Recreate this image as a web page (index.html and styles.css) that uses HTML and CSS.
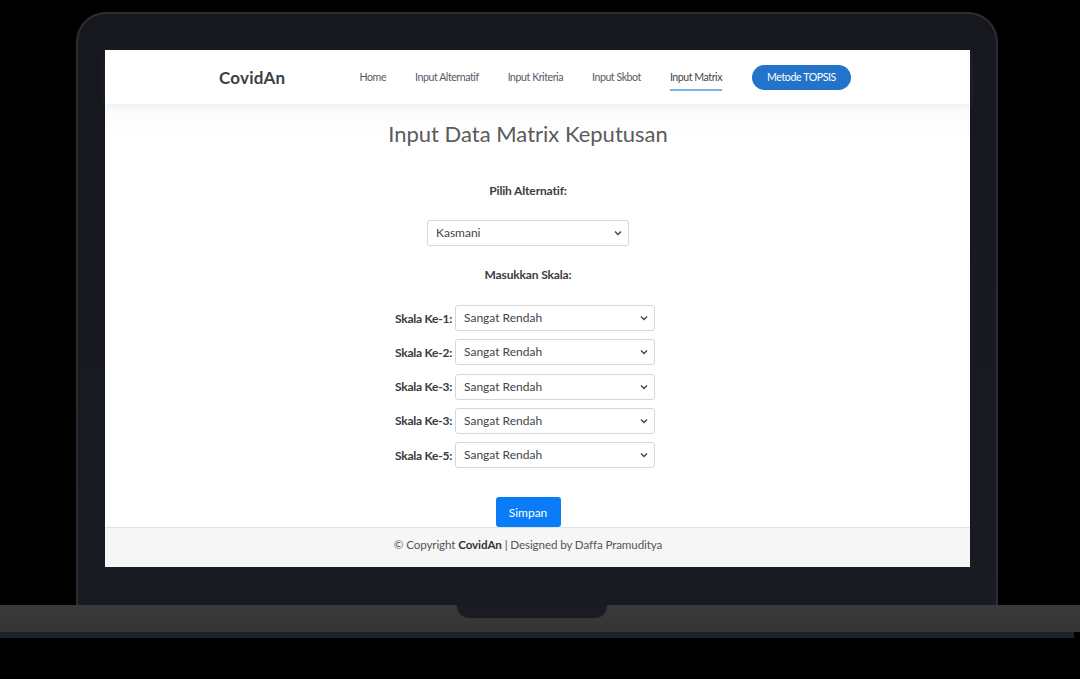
FILE: index.html
```html
<!DOCTYPE html>
<html lang="id">
<head>
<meta charset="utf-8">
<title>CovidAn - Input Matrix</title>
<link rel="stylesheet" href="styles.css">
</head>
<body>
<div class="device">
  <div class="lid">
    <div class="screen">
      <header class="nav">
        <div class="logo">CovidAn</div>
        <nav class="menu">
          <a class="link">Home</a>
          <a class="link">Input Alternatif</a>
          <a class="link">Input Kriteria</a>
          <a class="link">Input Skbot</a>
          <a class="link active">Input Matrix</a>
          <a class="cta">Metode TOPSIS</a>
        </nav>
      </header>
      <main class="main">
        <h1 class="title">Input Data Matrix Keputusan</h1>
        <div class="label">Pilih Alternatif:</div>
        <div class="select alt">Kasmani</div>
        <div class="label second">Masukkan Skala:</div>
        <div class="scales">
          <div class="row"><span class="row-label">Skala Ke-1:</span><div class="select">Sangat Rendah</div></div>
          <div class="row"><span class="row-label">Skala Ke-2:</span><div class="select">Sangat Rendah</div></div>
          <div class="row"><span class="row-label">Skala Ke-3:</span><div class="select">Sangat Rendah</div></div>
          <div class="row"><span class="row-label">Skala Ke-3:</span><div class="select">Sangat Rendah</div></div>
          <div class="row"><span class="row-label">Skala Ke-5:</span><div class="select">Sangat Rendah</div></div>
        </div>
        <button class="btn">Simpan</button>
      </main>
      <footer class="footer"><span>© Copyright <b>CovidAn</b> | Designed by Daffa Pramuditya</span></footer>
    </div>
  </div>
  <div class="base"><div class="notch"></div></div>
  <div class="base-edge"></div>
</div>
</body>
</html>
```
FILE: styles.css
```css
* { box-sizing: border-box; }
html, body { margin: 0; padding: 0; background: #000; }
body { font-family: Lato, "Open Sans", sans-serif; width: 1080px; height: 679px; overflow: hidden; }

.device { padding-top: 12px; }

.lid {
  margin-left: 76px;
  width: 922px;
  height: 593px;
  background: linear-gradient(#16181d, #181b21);
  border: 2px solid #2b2d32;
  border-bottom: none;
  border-radius: 30px 30px 0 0;
  padding: 36px 0 0 27px;
}

.screen {
  width: 865px;
  height: 517px;
  background: #fff;
  display: flex;
  flex-direction: column;
}

.nav {
  height: 54px;
  flex: none;
  display: flex;
  align-items: center;
  justify-content: space-between;
  padding: 0 119px 0 114px;
  background: #fff;
  box-shadow: 0 2px 8px rgba(120, 150, 190, 0.12);
  position: relative;
}
.logo { font-size: 17px; font-weight: 700; color: #3a3f47; letter-spacing: 0.2px; }
.menu { display: flex; align-items: center; gap: 29px; }
.link {
  font-size: 10.6px;
  color: #555a60;
  letter-spacing: -0.45px;
  padding: 6px 0;
  border-bottom: 2px solid transparent;
  margin-top: 1px;
}
.link.active { border-bottom-color: #74b6ea; color: #444; }
.cta {
  font-size: 10.6px;
  letter-spacing: -0.4px;
  color: #fff;
  background: #2273c9;
  border-radius: 13px;
  width: 99px;
  height: 25px;
  display: flex;
  align-items: center;
  justify-content: center;
  margin-left: 1px;
}

.main {
  flex: 1;
  display: flex;
  flex-direction: column;
  align-items: center;
  padding-right: 19px;
  background: linear-gradient(#fafbfc 0, #fff 40px);
}
.title {
  margin: 15px 0 0;
  font-size: 22px;
  line-height: 30px;
  font-weight: 400;
  color: #5b5b5b;
}
.label {
  margin-top: 34px;
  font-size: 12px;
  line-height: 16px;
  font-weight: 700;
  color: #3c3c3c;
  letter-spacing: -0.15px;
}
.label.second { margin-top: 21px; }

.select {
  width: 200px;
  height: 26px;
  border: 1px solid #d6d6d6;
  border-radius: 3px;
  background: #fff url("data:image/svg+xml;utf8,<svg xmlns='http://www.w3.org/2000/svg' width='8' height='6' viewBox='0 0 8 6'><path d='M1 1.5 4 4.5 7 1.5' fill='none' stroke='%23444' stroke-width='1.4'/></svg>") no-repeat right 6px center;
  font-size: 12px;
  line-height: 24px;
  padding-left: 8px;
  color: #444;
}
.select.alt { width: 202px; margin-top: 21px; }

.scales {
  margin-top: 22px;
  display: flex;
  flex-direction: column;
  gap: 8.3px;
  padding-right: 6px;
}
.row { display: flex; align-items: center; gap: 3px; }
.row-label {
  width: 57px;
  text-align: right;
  font-size: 12px;
  font-weight: 700;
  color: #3a3a3a;
  letter-spacing: -0.25px;
  white-space: nowrap;
}

.btn {
  margin-top: 29px;
  width: 65px;
  height: 30px;
  border: none;
  border-radius: 3px;
  background: #0b7cf7;
  color: #fff;
  font-family: inherit;
  font-size: 12px;
  padding: 0;
}

.footer {
  flex: none;
  height: 40px;
  background: #f6f6f6;
  border-top: 1px solid #e2e2e2;
  display: flex;
  align-items: center;
  justify-content: center;
  padding: 0 19px 6px 0;
  font-size: 11.6px;
  color: #555;
  letter-spacing: -0.1px;
  white-space: nowrap;
}
.footer b { color: #333; }

.base {
  height: 27px;
  background: linear-gradient(#3a3a3a, #353535);
  display: flex;
}
.notch {
  margin-left: 457px;
  width: 150px;
  height: 13px;
  background: #1a1c21;
  border-radius: 0 0 12px 12px;
}
.base-edge {
  height: 6px;
  background: #1c222b;
  margin-right: 6px;
}
```
